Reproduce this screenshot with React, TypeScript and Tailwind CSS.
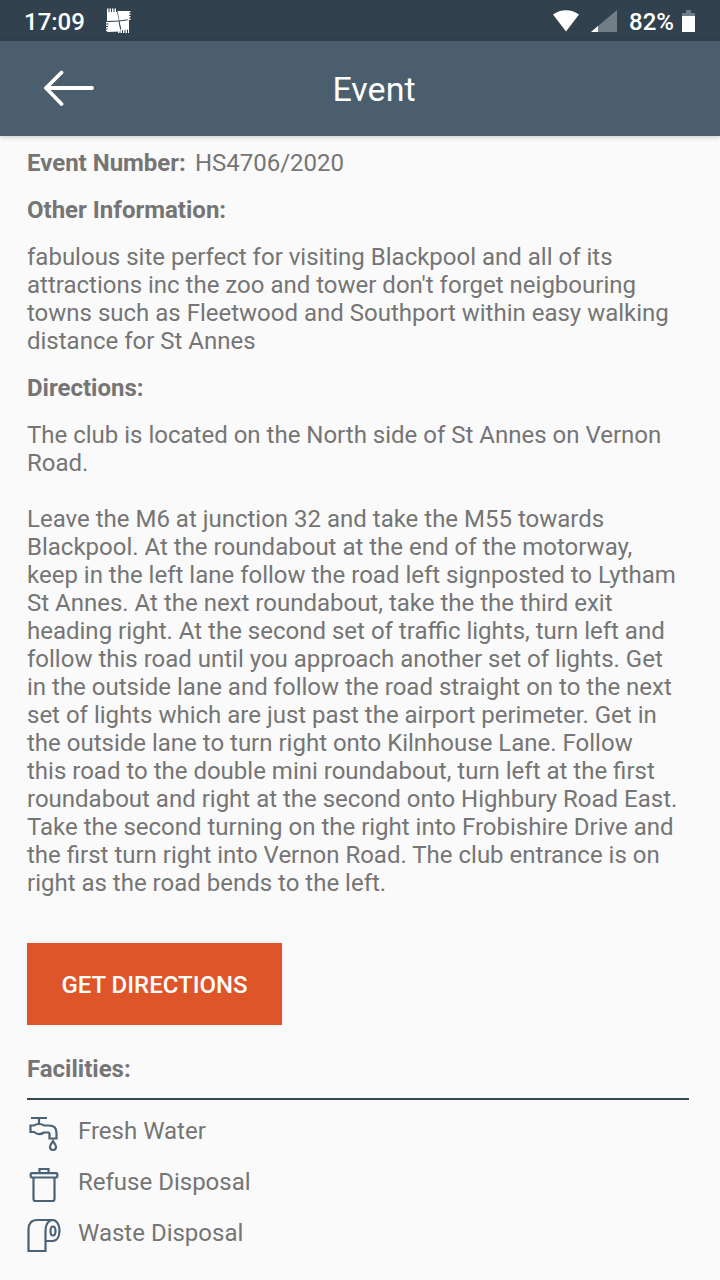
import type { ReactNode } from 'react';

interface FieldProps {
  label: string;
  children: ReactNode;
}

interface Facility {
  name: string;
  icon: ReactNode;
}

function StatusBar() {
  return (
    <div className="flex h-[41px] items-center justify-between bg-[#31414e] pl-6 pr-6 text-white">
      <div className="flex items-center gap-5">
        <span className="pt-0.5 text-2xl font-medium">17:09</span>
        <svg width="26" height="26" viewBox="0 0 26 26" fill="none">
          <path d="M2 4 12 4 14 12.500 2 13Z" fill="#fff" />
          <path d="M12.500 3 24 3 24 11 14.500 12.500Z" fill="#fff" />
          <path d="M4 14 13.500 13.500 15.500 23.500 2 24Z" fill="#fff" />
          <path d="M14.500 13.500 24 12 24 21.500 16.500 22Z" fill="#fff" />
          <path d="M2 2.500h10" stroke="#fff" strokeWidth="4" strokeDasharray="1.500 1" />
          <path d="M24 3v10" stroke="#fff" strokeWidth="3" strokeDasharray="1.500 1" />
          <path d="M13 23h11" stroke="#fff" strokeWidth="4" strokeDasharray="1.500 1" />
          <path d="M3 14v10" stroke="#fff" strokeWidth="4" strokeDasharray="1.500 1" />
        </svg>
      </div>
      <div className="flex items-center">
        <svg className="mr-3" width="26" height="22" viewBox="0 0 26 22">
          <path d="M0 4.500C7.500-1.200 18.500-1.200 26 4.500L13 21.500Z" fill="#fff" />
        </svg>
        <svg className="mr-3" width="26" height="22" viewBox="0 0 26 22">
          <path d="M26 0V22H0Z" fill="#727e87" />
          <path d="M7 16V22H0Z" fill="#fff" />
        </svg>
        <span className="mr-2 pt-0.5 text-2xl font-medium">82%</span>
        <svg className="mr-px" width="13" height="22" viewBox="0 0 13 22">
          <path d="M4 0h5v3h4v19H0V3h4Z" fill="#727e87" />
          <path d="M0 6h13v16H0Z" fill="#fff" />
        </svg>
      </div>
    </div>
  );
}

function Header() {
  return (
    <header className="relative flex h-[95px] items-center justify-center bg-[#4a5e6e] pl-7 shadow-[0_1px_5px_rgba(0,0,0,0.2)]">
      <button type="button" aria-label="Back" className="absolute left-11 top-7">
        <svg width="50" height="38" viewBox="0 0 50 38" fill="none" stroke="#fff" strokeWidth="3.800" strokeLinecap="round" strokeLinejoin="round">
          <path d="M48 19H2M17.500 3.500 2 19 17.500 35" />
        </svg>
      </button>
      <h1 className="text-[34px] leading-10 text-white">Event</h1>
    </header>
  );
}

function Field({ label, children }: FieldProps) {
  return (
    <section className="flex flex-col gap-[19px]">
      <h2 className="font-bold">{label}</h2>
      {children}
    </section>
  );
}

const facilities: Facility[] = [
  {
    name: 'Fresh Water',
    icon: (
      <path d="M4 2H20M12 2V8M3.500 9.500H7C9 7.500 15 7.500 17 9.500H22C27 9.500 29.500 12 29.500 17V22.500H22.500V18C22.500 17 22 16.500 21 16.500H17C14 18.500 10 18.500 7 16H3.500ZM26 25C24 28 23 29.500 23 31A3 3 0 0 0 29 31C29 29.500 28 28 26 25Z" />
    ),
  },
  {
    name: 'Refuse Disposal',
    icon: (
      <path d="M12.500 6V2H21.500V6M4.800 6.200H29.200C30.800 6.200 30.800 10.500 29.200 10.500H4.800C3.200 10.500 3.200 6.200 4.800 6.200ZM6.500 10.500V32C6.500 33.500 7 34 8.500 34H25.500C27 34 27.500 33.500 27.500 32V10.500" />
    ),
  },
  {
    name: 'Waste Disposal',
    icon: (
      <path d="M25.500 2H10C4.500 2 1.500 5.500 1.500 11V33H18.500V12.500C18.500 6.500 21.500 2 25.500 2S32.500 6.500 32.500 12.500S30 23 25.500 23H18.500M26 8.500C24.500 8.500 23.500 10.500 23.500 13S24.500 17.500 26 17.500S28.500 15.500 28.500 13S27.500 8.500 26 8.500Z" />
    ),
  },
];

export default function App() {
  return (
    <div className="min-h-screen bg-[#fafafa] font-['Roboto',sans-serif] text-2xl leading-7 text-[#757575]">
      <StatusBar />
      <Header />
      <main className="pb-4 pl-[27px] pr-[31px] pt-[13px]">
        <div className="flex flex-col gap-[19px] pr-2">
          <p className="flex gap-[9px]">
            <span className="font-bold">Event Number:</span>
            <span>HS4706/2020</span>
          </p>
          <Field label="Other Information:">
            <p>
              fabulous site perfect for visiting Blackpool and all of its attractions inc the zoo and tower don't forget
              neigbouring towns such as Fleetwood and Southport within easy walking distance for St Annes
            </p>
          </Field>
          <Field label="Directions:">
            <div className="flex flex-col gap-7">
              <p>The club is located on the North side of St Annes on Vernon Road.</p>
              <p>
                Leave the M6 at junction 32 and take the M55 towards Blackpool. At the roundabout at the end of the
                motorway, keep in the left lane follow the road left signposted to Lytham St Annes. At the next
                roundabout, take the the third exit heading right. At the second set of traffic lights, turn left and
                follow this road until you approach another set of lights. Get in the outside lane and follow the road
                straight on to the next set of lights which are just past the airport perimeter. Get in the outside lane
                to turn right onto Kilnhouse Lane. Follow this&nbsp;road to the double mini roundabout, turn left at the
                first roundabout and right at the second onto Highbury Road East. Take the second turning on the right
                into Frobishire Drive and the first turn right into Vernon Road. The club entrance is on right as the
                road bends to the left.
              </p>
            </div>
          </Field>
        </div>

        <button
          type="button"
          className="mt-[46px] h-[82px] min-w-[255px] bg-[#de5529] px-8 pt-0.5 font-medium text-white shadow-[0_0_3px_rgba(0,0,0,0.1)]"
        >
          GET DIRECTIONS
        </button>

        <section className="mt-[30px]">
          <h2 className="border-b-2 border-[#36474f] pb-[15px] font-bold">Facilities:</h2>
          <ul className="mt-4 flex flex-col gap-[15px]">
            {facilities.map((facility) => (
              <li key={facility.name} className="flex h-9 gap-[15px]">
                <svg className="shrink-0" width="36" height="36" viewBox="0 0 36 36" fill="none" stroke="#4a6275" strokeWidth="2.200">
                  {facility.icon}
                </svg>
                <span className="pt-px">{facility.name}</span>
              </li>
            ))}
          </ul>
        </section>
      </main>
    </div>
  );
}
